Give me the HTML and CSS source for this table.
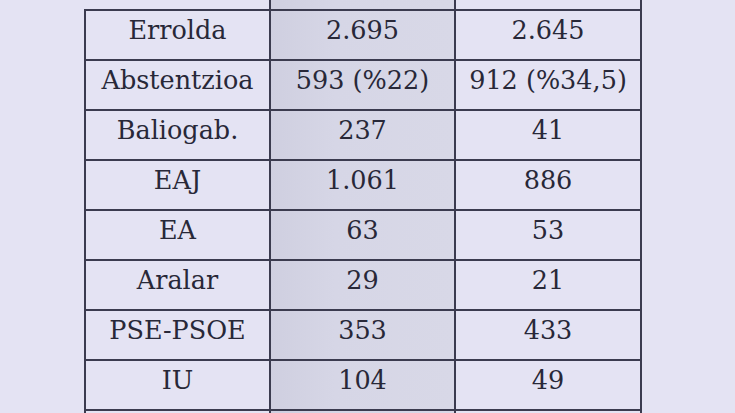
FILE: index.html
```html
<!DOCTYPE html>
<html lang="eu">
<head>
<meta charset="utf-8">
<title>Hauteskundeak</title>
<link rel="stylesheet" href="styles.css">
</head>
<body>
<div class="page">
  <table class="results">
    <tr class="head">
      <td class="label blank"></td>
      <td class="mid"></td>
      <td class="last"></td>
    </tr>
    <tr><td class="label">Errolda</td><td class="mid">2.695</td><td class="last">2.645</td></tr>
    <tr><td class="label">Abstentzioa</td><td class="mid">593 (%22)</td><td class="last">912 (%34,5)</td></tr>
    <tr><td class="label">Baliogab.</td><td class="mid">237</td><td class="last">41</td></tr>
    <tr><td class="label">EAJ</td><td class="mid">1.061</td><td class="last">886</td></tr>
    <tr><td class="label">EA</td><td class="mid">63</td><td class="last">53</td></tr>
    <tr><td class="label">Aralar</td><td class="mid">29</td><td class="last">21</td></tr>
    <tr><td class="label">PSE-PSOE</td><td class="mid">353</td><td class="last">433</td></tr>
    <tr><td class="label">IU</td><td class="mid">104</td><td class="last">49</td></tr>
    <tr><td class="label">&nbsp;</td><td class="mid">&nbsp;</td><td class="last">&nbsp;</td></tr>
  </table>
</div>
</body>
</html>
```

FILE: styles.css
```css
html, body {
  margin: 0;
  padding: 0;
  background: #e4e3f3;
  overflow: hidden;
}

.page {
  width: 735px;
  height: 413px;
  overflow: hidden;
  padding-left: 84px;
  box-sizing: border-box;
}

.results {
  border-collapse: collapse;
  font-family: "DejaVu Serif", "Liberation Serif", serif;
  font-size: 25.5px;
  color: #282838;
  table-layout: fixed;
}

.results td {
  border: 2px solid #3b3b4f;
  width: 185px;
  height: 50px;
  padding: 0 0 10px;
  box-sizing: border-box;
  text-align: center;
  vertical-align: middle;
  white-space: nowrap;
  line-height: normal;
}

.results td.last {
  width: 186px;
}

.results td.mid {
  background: linear-gradient(to right, #cfcfe0 0%, #d6d6e6 35%, #d8d8e7 100%);
}

.results tr.head td {
  height: 10px;
  padding: 0;
  border-top: none;
}

.results tr.head td.blank {
  border-left: none;
}
```
